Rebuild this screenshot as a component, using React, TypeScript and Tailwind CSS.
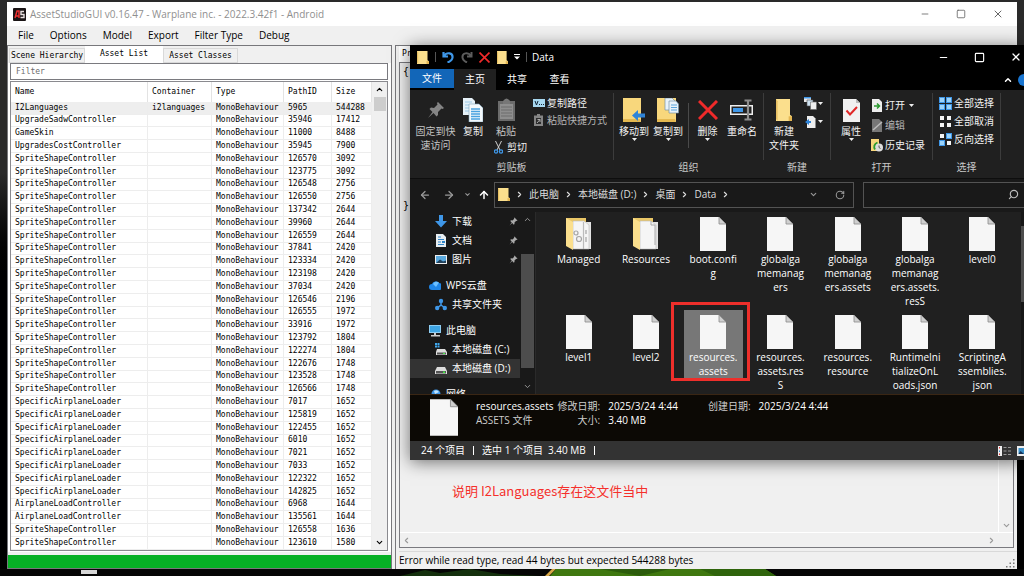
import React from "react";
import { ArrowLeft, ArrowRight, ArrowUp, ChevronDown, ChevronLeft, ChevronRight, ChevronUp, Minus, RotateCw, Search, Square, X } from "lucide-react";

const assets: [string, string, number, number][] = [
  ["I2Languages", "i2languages", 5965, 544288],
  ["UpgradeSadwController", "", 35946, 17412],
  ["GameSkin", "", 11000, 8488],
  ["UpgradesCostController", "", 35945, 7900],
  ["SpriteShapeController", "", 126570, 3092],
  ["SpriteShapeController", "", 123775, 3092],
  ["SpriteShapeController", "", 126548, 2756],
  ["SpriteShapeController", "", 126550, 2756],
  ["SpriteShapeController", "", 137342, 2644],
  ["SpriteShapeController", "", 39960, 2644],
  ["SpriteShapeController", "", 126559, 2644],
  ["SpriteShapeController", "", 37841, 2420],
  ["SpriteShapeController", "", 123334, 2420],
  ["SpriteShapeController", "", 123198, 2420],
  ["SpriteShapeController", "", 37034, 2420],
  ["SpriteShapeController", "", 126546, 2196],
  ["SpriteShapeController", "", 126555, 1972],
  ["SpriteShapeController", "", 33916, 1972],
  ["SpriteShapeController", "", 123792, 1804],
  ["SpriteShapeController", "", 122274, 1804],
  ["SpriteShapeController", "", 122676, 1748],
  ["SpriteShapeController", "", 123528, 1748],
  ["SpriteShapeController", "", 126566, 1748],
  ["SpecificAirplaneLoader", "", 7017, 1652],
  ["SpecificAirplaneLoader", "", 125819, 1652],
  ["SpecificAirplaneLoader", "", 122455, 1652],
  ["SpecificAirplaneLoader", "", 6010, 1652],
  ["SpecificAirplaneLoader", "", 7021, 1652],
  ["SpecificAirplaneLoader", "", 7033, 1652],
  ["SpecificAirplaneLoader", "", 122322, 1652],
  ["SpecificAirplaneLoader", "", 142825, 1652],
  ["AirplaneLoadController", "", 6968, 1644],
  ["AirplaneLoadController", "", 135561, 1644],
  ["SpriteShapeController", "", 126558, 1636],
  ["SpriteShapeController", "", 123610, 1580],
];

// lines are broken the way Explorer wraps long names
const files: { lines: string[]; kind?: string; selected?: boolean }[] = [
  { lines: ["Managed"], kind: "gears" },
  { lines: ["Resources"], kind: "folder" },
  { lines: ["boot.confi", "g"] },
  { lines: ["globalga", "memanag", "ers"] },
  { lines: ["globalga", "memanag", "ers.assets"] },
  { lines: ["globalga", "memanag", "ers.assets.", "resS"] },
  { lines: ["level0"] },
  { lines: ["level1"] },
  { lines: ["level2"] },
  { lines: ["resources.", "assets"], selected: true },
  { lines: ["resources.", "assets.res", "S"] },
  { lines: ["resources.", "resource"] },
  { lines: ["RuntimeIni", "tializeOnL", "oads.json"] },
  { lines: ["ScriptingA", "ssemblies.", "json"] },
];

export default function App() {
  return (
    <div className="relative flex h-screen w-full flex-col overflow-hidden bg-gradient-to-b from-[#2a2a2a] from-30% to-black to-50% px-[7px] pt-[2px] font-['Open_Sans','Noto_Sans_CJK_SC',sans-serif] text-[10px] text-black">
      <AssetStudio />
      <Wallpaper />
      <Explorer />
      <p className="absolute left-[452px] top-[482px] text-[13px] leading-[18px] text-[#f5302c] font-['Noto_Sans_CJK_SC',sans-serif]">
        说明 I2Languages存在这文件当中
      </p>
    </div>
  );
}

function Wallpaper() {
  return (
    <svg className="-mx-[7px] h-[7px] shrink-0 self-stretch" viewBox="0 0 1024 7" preserveAspectRatio="none" aria-hidden="true">
      <rect width="1024" height="7" fill="#050505" />
      <rect x="81" y="1" width="16" height="4" fill="#d6d6d6" />
      <path d="M400 7 L425 1 L440 4 L470 0 L500 5 L540 7Z" fill="#14300d" />
      <path d="M545 7 L552 0 L556 0 L549 7Z" fill="#d8a848" />
      <path d="M556 0 H765 L776 7 H550Z" fill="#3f780f" />
      <path d="M600 0 L640 7 L670 0Z" fill="#2c5c0c" />
      <path d="M700 0 H765 L776 7 H715Z" fill="#2f640c" />
    </svg>
  );
}

/* ---------- AssetStudio window ---------- */

function AssetStudio() {
  return (
    <main className="flex min-h-0 flex-1 flex-col bg-[#f0f0f0]">
      <header className="flex h-6 shrink-0 items-center bg-white pl-[6px] pr-[13px]">
        <svg viewBox="0 0 13 13" className="h-[13px] w-[13px]" aria-hidden="true">
          <rect width="13" height="13" rx="1" fill="#1a1415" />
          <path d="M2 10 L4 3 H6 V10 M3 8 H6" fill="none" stroke="#f03030" strokeWidth="1.4" />
          <path d="M11 3.5 H8 V6.5 H11 V9.5 H7.5" fill="none" stroke="#e8e0e0" strokeWidth="1.4" />
        </svg>
        <h1 className="ml-[4px] flex-1 text-[10px] text-[#8f8f8f]">AssetStudioGUI v0.16.47 - Warplane inc. - 2022.3.42f1 - Android</h1>
        <div className="flex gap-[26px] text-[#666]">
          <button aria-label="Minimize"><Minus size={10} strokeWidth={2} /></button>
          <button aria-label="Maximize"><Square size={10} strokeWidth={2} /></button>
          <button aria-label="Close"><X size={12} strokeWidth={2} /></button>
        </div>
      </header>
      <nav className="flex h-[19px] shrink-0 items-center gap-4 pl-[11px]">
        {["File", "Options", "Model", "Export", "Filter Type", "Debug"].map((m) => (
          <button key={m}>{m}</button>
        ))}
      </nav>
      <div className="flex min-h-0 flex-1">
        <AssetListPane />
        <PreviewPane />
      </div>
    </main>
  );
}

function AssetListPane() {
  return (
    <section className="flex w-[385px] shrink-0 flex-col border border-[#77777b] font-['DejaVu_Sans_Mono',monospace] text-[8px]">
      <div className="flex h-[17px] shrink-0 items-end pl-[1px]">
        <button className="h-[15px] w-[76px] border border-[#d9d9d9]">Scene Hierarchy</button>
        <button className="h-[17px] w-[78px] bg-white pb-[2px]">Asset List</button>
        <button className="h-[15px] w-[75px] border border-[#d9d9d9]">Asset Classes</button>
      </div>
      <div className="flex min-h-0 flex-1 flex-col bg-white pb-[1px] pl-[2px] pr-[3px]">
        <input aria-label="Filter" placeholder="Filter" className="h-[17px] w-full shrink-0 border border-[#7a7a7f] px-[5px] leading-none outline-none placeholder:text-[#6d6d6d]" />
        <div className="mt-[1px] flex min-h-0 flex-1 border border-[#8a8a8f]">
          <table className="min-w-0 flex-1 table-fixed border-collapse text-left">
            <colgroup>
              <col />
              <col className="w-[64px]" />
              <col className="w-[72px]" />
              <col className="w-[48px]" />
              <col className="w-[40px]" />
            </colgroup>
            <thead>
              <tr className="h-[20px]">
                {["Name", "Container", "Type", "PathID", "Size"].map((h) => (
                  <th key={h} className="border-r border-[#e3e3e3] p-0 pl-[4px] font-normal leading-none">{h}</th>
                ))}
              </tr>
            </thead>
            <tbody>
              {assets.map(([name, container, id, size], i) => (
                <tr key={i} className={i === 0 ? "bg-[#eeeeee]" : ""}>
                  {[name, container, "MonoBehaviour", id, size].map((v, c) => (
                    <td key={c} className="whitespace-nowrap border-b border-r border-[#ededed] p-0 pl-[4px] leading-[8px]">{v}</td>
                  ))}
                </tr>
              ))}
            </tbody>
          </table>
          <div className="flex w-[15px] flex-col items-center justify-between bg-[#f0f0f0] py-[3px]">
            <div className="flex flex-col items-center gap-[3px]">
              <ChevronUp size={9} strokeWidth={3} />
              <div className="h-[14px] w-[12px] bg-[#cdcdcd]" />
            </div>
            <ChevronDown size={9} strokeWidth={3} />
          </div>
        </div>
      </div>
      <div role="progressbar" aria-label="Loading" aria-valuenow={100} className="mt-[3px] h-[13px] shrink-0 bg-[#06b025]" />
    </section>
  );
}

function PreviewPane() {
  return (
    <section className="ml-[3px] flex min-w-0 flex-1 flex-col border-l border-t border-[#77777b] pl-[3px]">
      <button className="h-[16px] w-[48px] shrink-0 bg-white pl-[3px] text-left font-['DejaVu_Sans_Mono',monospace] text-[8px]">Preview</button>
      <div className="mr-[3px] flex min-h-0 flex-1 flex-col border border-[#7a7a7f]">
        <div className="flex min-h-0 flex-1">
          <pre className="flex flex-1 flex-col justify-between pb-[319px] pl-[3px] pt-[2px] font-['DejaVu_Sans_Mono',monospace] text-[10px] leading-[14px]">
            <span>{"{"}</span>
            <span>{"}"}</span>
          </pre>
          <div className="flex w-[15px] items-end justify-center border-l border-white pb-[2px] text-[#999]">
            <ChevronDown size={9} strokeWidth={3} />
          </div>
        </div>
        <div className="flex h-[15px] items-center justify-between border-t border-white pl-[2px] pr-[17px] text-[#999]">
          <ChevronLeft size={9} strokeWidth={3} />
          <ChevronRight size={9} strokeWidth={3} />
        </div>
      </div>
      <footer className="mt-[3px] flex h-[18px] shrink-0 items-center justify-between border-t border-[#d9d9d9]">
        <span>Error while read type, read 44 bytes but expected 544288 bytes</span>
        <svg viewBox="0 0 9 9" className="mr-[2px] mt-[5px] h-[9px] w-[9px]" fill="#777" aria-hidden="true">
          <path d="M7 0h1.500v1.500H7zM7 3.500h1.500V5H7zM7 7h1.500v1.500H7zM3.500 3.500H5V5H3.500zM3.500 7H5v1.500H3.500zM0 7h1.500v1.500H0z" />
        </svg>
      </footer>
    </section>
  );
}

/* ---------- Explorer window ---------- */

function Explorer() {
  return (
    <section className="absolute left-[410px] right-0 top-[45px] bg-[#191919] text-white shadow-[0_2px_16px_rgba(0,0,0,0.55)]">
      <header className="flex h-6 items-center bg-black pl-[7px]">
        <FolderIcon className="h-[13px] w-[12px]" />
        <Bar />
        <svg viewBox="0 0 12 12" className="ml-[6px] h-[12px] w-[12px]" fill="none" stroke="#3f97e8" strokeWidth="2.200" aria-hidden="true">
          <path d="M1.500 1 V5.500 H6 M2 5 C5 0.500 11 2 10.500 6.500 C10.300 9 8 10.500 5.500 11.500" />
        </svg>
        <svg viewBox="0 0 12 12" className="ml-[7px] h-[12px] w-[12px]" fill="none" stroke="#5c5c5c" strokeWidth="2" aria-hidden="true">
          <path d="M10.500 1 V5.500 H6 M10 5 C7 0.500 1 2 1.500 6.500 C1.700 9 4 10.500 6 11.500" />
        </svg>
        <CrossIcon className="ml-[6px] h-[11px] w-[11px]" />
        <FolderIcon className="ml-[7px] h-[13px] w-[11px]" />
        <svg viewBox="0 0 6 6" className="ml-[6px] h-[6px] w-[6px]" fill="#fff" aria-hidden="true"><path d="M0 0h6v1H0zM0 2.500h6L3 5.500z" /></svg>
        <Bar />
        <h2 className="ml-[5px] flex-1 text-[10px]">Data</h2>
        <div className="flex gap-[25px] pr-[2px]">
          <button aria-label="Minimize"><Minus size={11} strokeWidth={2.500} /></button>
          <button aria-label="Maximize"><Square size={11} strokeWidth={2.500} /></button>
          <button aria-label="Close"><X size={12} strokeWidth={2.500} /></button>
        </div>
      </header>
      <nav className="flex h-[21px] items-stretch bg-black">
        <button className="mb-[2px] w-[44px] bg-[#1266b8]">文件</button>
        <button className="w-[42px] bg-[#202020]">主页</button>
        <button className="w-[42px]">共享</button>
        <button className="w-[43px]">查看</button>
        <span className="flex-1" />
        <button aria-label="Collapse ribbon" className="pr-[5px]"><ChevronUp size={10} strokeWidth={3.500} /></button>
        <span className="h-[12px] w-[6px] self-center rounded-l-full bg-[#1976d2]" />
      </nav>
      <Ribbon />
      <AddressRow />
      <div className="flex h-[185px] pt-[3px]">
        <NavPane />
        <FileGrid />
        <div className="w-[3px] bg-[#171717] pt-[14px]"><div className="h-[76px] bg-[#4d4d4d]" /></div>
      </div>
      <DetailsPane />
      <footer className="flex h-[19px] items-center bg-[#333] pl-[11px]">
        <span>24 个项目</span>
        <span className="mx-[8px] h-[9px] w-px bg-white" />
        <span>选中 1 个项目</span>
        <span className="ml-[5px]">3.40 MB</span>
        <span className="mx-[8px] h-[9px] w-px bg-white" />
        <svg viewBox="0 0 26 12" className="ml-auto h-[12px] w-[26px]" aria-hidden="true">
          <path d="M0 1h4v10H0z" fill="#eee" />
          <path d="M1.500 2v1.500M1.500 8.500V10" stroke="#d33" />
          <path d="M1.500 5.500V7" stroke="#38c" />
          <path d="M5.500 2.500h3M5.500 6h3M5.500 9.500h3M10 2.500h3M10 6h3M10 9.500h3" stroke="#999" />
          <path d="M19 1h7v10h-7z" fill="#eee" />
          <path d="M20.500 3H26v6h-5.500z" fill="#3b90c8" />
          <path d="M20.500 9l2-3 3.500 3z" fill="#16345a" />
        </svg>
      </footer>
    </section>
  );
}

function Ribbon() {
  return (
    <div className="flex h-[89px] border-b border-[#0e0e0e] bg-[#202020] text-[#f2f2f2]">
      <Group label="剪贴板" width="w-[203px]" pad="pl-[5px]">
        <BigButton label={["固定到快", "速访问"]} className="w-[41px] text-[#c4c4c4]">
          <svg viewBox="0 0 18 18" className="h-[18px] w-[18px]" fill="#858585" aria-hidden="true">
            <path d="M11 1 L17 7 L15.500 8 L14.500 7.500 L11 11 L11 14 L9.500 15.500 L6.500 12 L1 17 L5.500 11 L2.500 8 L4 6.500 L7 7 L10.500 3.500 L10 2z" />
          </svg>
        </BigButton>
        <BigButton label={["复制"]} className="w-[34px]"><CopyIcon className="h-[24px] w-[20px]" /></BigButton>
        <div className="w-[32px]">
          <BigButton label={["粘贴"]} className="w-full text-[#c4c4c4]">
            <svg viewBox="0 0 17 24" className="h-[24px] w-[17px]" aria-hidden="true">
              <rect x="0" y="3" width="17" height="20" fill="#6c6c6c" />
              <rect x="2" y="6" width="13" height="15" fill="#8e8e8e" />
              <path d="M3 9h11M3 12h11M3 15h11M3 18h11" stroke="#6c6c6c" />
              <path d="M5 3 Q8.500 -2 12 3V6H5z" fill="#777" />
            </svg>
          </BigButton>
          <button className="mt-[2px] flex items-center gap-[4px] whitespace-nowrap pl-[4px] leading-[14px]">
            <svg viewBox="0 0 9 13" className="h-[13px] w-[9px] shrink-0" fill="none" aria-hidden="true">
              <path d="M1.500 0 L6 9 M7.500 0 L3 9" stroke="#d0d0d0" />
              <circle cx="2" cy="10.500" r="1.600" stroke="#3f97e8" strokeWidth="1.300" />
              <circle cx="7" cy="10.500" r="1.600" stroke="#3f97e8" strokeWidth="1.300" />
            </svg>
            剪切
          </button>
        </div>
        <div className="ml-[11px] flex flex-col gap-[3px] pt-[6px]">
          <SmallButton label="复制路径">
            <svg viewBox="0 0 12 12" className="h-[12px] w-[12px]" aria-hidden="true">
              <rect y="2" width="12" height="8" fill="#a8d8f0" />
              <path d="M2 4l1.500 4L5 4M6 7.500h1M8 7.500h1M10 7.500h1" stroke="#123" fill="none" />
            </svg>
          </SmallButton>
          <SmallButton label="粘贴快捷方式" className="text-[#b5b5b5]">
            <svg viewBox="0 0 12 12" className="h-[12px] w-[12px]" aria-hidden="true">
              <path d="M1 1.500h3V0h3v1.500h3V12H1z" fill="#858585" />
              <path d="M3 4h5v6H3z" fill="#2c2c2c" />
              <path d="M4 9 L7 5.500M4.500 5.500H7V8" stroke="#aaa" fill="none" />
            </svg>
          </SmallButton>
        </div>
      </Group>
      <Group label="组织" width="w-[149px]" pad="pl-[3px]">
        <BigButton label={["移动到"]} className="w-[34px]" menu>
          <svg viewBox="0 0 22 24" className="h-[24px] w-[22px]" aria-hidden="true">
            <path d="M0 0h18v24H0z" fill="#f8d77c" />
            <path d="M0 21h17l1 3H0z" fill="#e5b950" />
            <path d="M9 17.500l6-5.500v3.500h7v4h-7V23z" fill="#2f84d8" />
          </svg>
        </BigButton>
        <BigButton label={["复制到"]} className="w-[34px]" menu>
          <svg viewBox="0 0 22 24" className="h-[24px] w-[22px]" aria-hidden="true">
            <path d="M0 0h19v24H0z" fill="#f8d77c" />
            <path d="M0 21h18l1 3H0z" fill="#e5b950" />
            <path d="M8 0h7l3 3v9H8z" fill="#e8f3fa" stroke="#7794a8" strokeWidth=".7" />
            <path d="M12 3h7l2.500 3v9H12z" fill="#e8f3fa" stroke="#7794a8" strokeWidth=".7" />
            <path d="M14 7h6M14 9.500h6M14 12h6" stroke="#5aa5dc" />
          </svg>
        </BigButton>
        <span className="ml-[3px] mt-[13px] h-[45px] w-px bg-[#4a4a4a]" />
        <BigButton label={["删除"]} className="w-[37px]" menu><CrossIcon className="h-[20px] w-[20px]" /></BigButton>
        <BigButton label={["重命名"]} className="w-[32px]">
          <svg viewBox="0 0 24 22" className="h-[22px] w-[24px]" aria-hidden="true">
            <rect x="0" y="6" width="23" height="10" fill="#eee" />
            <rect x="1.500" y="7.500" width="20" height="7" fill="#222" />
            <rect x="3" y="9" width="10" height="4" fill="#3f97e8" />
            <path d="M18 2v18M14.500 1.500h7M14.500 20.500h7" stroke="#8e8e8e" strokeWidth="2.200" />
          </svg>
        </BigButton>
      </Group>
      <Group label="新建" width="w-[66px]">
        <BigButton label={["新建", "文件夹"]} className="w-[40px]"><FolderIcon className="h-[22px] w-[16px]" /></BigButton>
        <div className="flex flex-col gap-[5px] pt-[7px]">
          <button aria-label="新建项目" className="flex items-center gap-[1px]">
            <svg viewBox="0 0 13 13" className="h-[13px] w-[13px]" aria-hidden="true">
              <path d="M0 0h7v5H0z" fill="#e9e9e9" /><path d="M0 0h7v1.500H0z" fill="#3f97e8" />
              <path d="M3 3h6v6H3z" fill="#cfe3f2" stroke="#555" strokeWidth=".6" />
              <path d="M6.500 5h6v7.500h-6z" fill="#eee" stroke="#666" strokeWidth=".6" />
            </svg>
            <Caret />
          </button>
          <button aria-label="轻松访问" className="flex items-center gap-[1px]">
            <svg viewBox="0 0 13 13" className="h-[13px] w-[13px]" aria-hidden="true">
              <path d="M3 1h6l2.500 2.500V13H3z" fill="#eee" />
              <path d="M1 7l4-3v2h2v2H5v2z" fill="#2f84d8" />
            </svg>
            <Caret />
          </button>
        </div>
      </Group>
      <Group label="打开" width="w-[101px]">
        <BigButton label={["属性"]} className="w-[40px]" menu>
          <svg viewBox="0 0 17 23" className="h-[23px] w-[17px]" aria-hidden="true">
            <path d="M0 0h13l4 4v19H0z" fill="#f1f1f1" />
            <path d="M13 0v4h4z" fill="#bbb" />
            <path d="M3.500 11.500l3.500 4 7-7.500" stroke="#e02828" strokeWidth="2" fill="none" />
          </svg>
        </BigButton>
        <div className="flex flex-col gap-[6px] pt-[8px]">
          <SmallButton label="打开" menu>
            <svg viewBox="0 0 12 13" className="h-[13px] w-[12px]" aria-hidden="true">
              <path d="M1 0h7l3 3v10H1z" fill="#eee" />
              <path d="M3 7h5M6 4.500L8.500 7 6 9.500" stroke="#2b9a30" strokeWidth="1.500" fill="none" />
            </svg>
          </SmallButton>
          <SmallButton label="编辑" className="text-[#b5b5b5]">
            <svg viewBox="0 0 12 13" className="h-[13px] w-[12px]" aria-hidden="true">
              <path d="M1 0h7l3 3v10H1z" fill="#777" />
              <path d="M2 11L11 3" stroke="#bbb" strokeWidth="1.500" />
            </svg>
          </SmallButton>
          <SmallButton label="历史记录">
            <svg viewBox="0 0 12 13" className="h-[13px] w-[12px]" aria-hidden="true">
              <path d="M0 0h8v12H0z" fill="#f8d77c" />
              <circle cx="8" cy="8.500" r="4" fill="#ddd" />
              <path d="M8 6.500v2l1.500 1" stroke="#555" fill="none" />
              <path d="M6.500 3.500C3 5 2.500 8 4 10.500" stroke="#2b9a30" strokeWidth="1.800" fill="none" />
            </svg>
          </SmallButton>
        </div>
      </Group>
      <Group label="选择" width="w-[67px]" pad="pl-[6px]">
        <div className="flex flex-col gap-[4px] pt-[6px]">
          <SmallButton label="全部选择"><Tiles on={[true, true, true, true]} /></SmallButton>
          <SmallButton label="全部取消"><Tiles on={[false, false, false, false]} /></SmallButton>
          <SmallButton label="反向选择"><Tiles on={[false, true, true, false]} /></SmallButton>
        </div>
      </Group>
    </div>
  );
}

function Group({ label, width, pad = "", children }: { label: string; width: string; pad?: string; children: React.ReactNode }) {
  return (
    <div className="flex shrink-0">
      <div className={`flex flex-col ${width}`}>
        <div className={`flex h-[69px] ${pad}`}>{children}</div>
        <div className="text-center leading-[16px] text-[#c8c8c8]">{label}</div>
      </div>
      <span className="mt-[3px] h-[67px] w-px bg-[#3c3c3c]" />
    </div>
  );
}

function BigButton({ label, className, menu, children }: { label: string[]; className: string; menu?: boolean; children: React.ReactNode }) {
  return (
    <button className={`flex shrink-0 flex-col items-center self-start whitespace-nowrap pt-[8px] leading-[14px] ${className}`}>
      <span className="mb-[2px] flex h-[24px] items-center">{children}</span>
      {label.map((l) => <span key={l}>{l}</span>)}
      {menu && <Caret />}
    </button>
  );
}

function SmallButton({ label, className = "", menu, children }: { label: string; className?: string; menu?: boolean; children: React.ReactNode }) {
  return (
    <button className={`flex items-center gap-[2px] whitespace-nowrap leading-[14px] ${className}`}>
      {children}
      {label}
      {menu && <span className="ml-[2px]"><Caret /></span>}
    </button>
  );
}

function AddressRow() {
  return (
    <div className="flex h-[30px] items-center pt-[1px] text-[#ddd]">
      <div className="flex w-[84px] items-center pl-[9px]">
        <button aria-label="后退" className="text-[#999]"><ArrowLeft size={12} strokeWidth={2.500} /></button>
        <button aria-label="前进" className="ml-[12px] text-[#999]"><ArrowRight size={12} strokeWidth={2.500} /></button>
        <button aria-label="最近" className="ml-[9px] text-[#999]"><ChevronDown size={7} strokeWidth={3.500} /></button>
        <button aria-label="上移" className="ml-[7px] text-white"><ArrowUp size={12} strokeWidth={3} /></button>
      </div>
      <div className="flex h-[26px] min-w-0 flex-1 items-center border border-[#535353] pl-[3px] pr-[8px]">
        <FolderIcon className="h-[13px] w-[12px]" />
        {["此电脑", "本地磁盘 (D:)", "桌面", "Data"].map((c) => (
          <React.Fragment key={c}>
            <ChevronRight size={9} strokeWidth={3} className="mx-[5px] shrink-0" />
            <button className="whitespace-nowrap">{c}</button>
          </React.Fragment>
        ))}
        <ChevronRight size={9} strokeWidth={3} className="ml-[5px]" />
        <ChevronDown size={9} strokeWidth={3} className="ml-auto text-[#999]" />
        <RotateCw size={10} strokeWidth={2.500} className="ml-[17px] text-[#999]" />
      </div>
      <label className="ml-[9px] flex h-[26px] w-[161px] items-center border border-r-0 border-[#535353] pr-[5px]">
        <input aria-label="搜索" className="min-w-0 flex-1 bg-transparent px-[4px] outline-none" />
        <Search size={11} strokeWidth={2.500} className="-scale-x-100 text-[#bbb]" />
      </label>
    </div>
  );
}

function NavPane() {
  return (
    <aside className="flex w-[126px] shrink-0 overflow-hidden border-r border-[#2a2a2a]">
      <div className="flex w-[110px] flex-col">
        <NavItem label="下载" pinned sub>
          <path d="M4 0h4v6h4L6 12.500 0 6h4z" fill="#3f97e8" />
        </NavItem>
        <NavItem label="文档" pinned sub>
          <path d="M1 0h7l3 3v10H1z" fill="#e8eef2" /><path d="M3 3h3M3 5.500h6M3 8h3M3 10.500h6" stroke="#2f84c8" /><path d="M7 7h3v2H7z" fill="#2f84c8" />
        </NavItem>
        <NavItem label="图片" pinned sub>
          <path d="M0 2h12v9H0z" fill="#eee" /><path d="M1 3h10v7H1z" fill="#5aa9de" /><path d="M1 10l4-3.500 3 2 3-1v2.500z" fill="#20405a" />
        </NavItem>
        <div className="h-[7px] shrink-0" />
        <NavItem label="WPS云盘">
          <path d="M3 11a3 3 0 0 1 0-6 4 4 0 0 1 7-1 3.500 3.500 0 0 1-.5 7z" fill="#1f86e8" /><path d="M4 5a4 4 0 0 1 6-1.500L7 8z" fill="#6cc0ff" />
        </NavItem>
        <NavItem label="共享文件夹" sub>
          <path d="M6 3v4L2 10M6 7l4 3" stroke="#3f97e8" strokeWidth="1.500" fill="none" /><circle cx="6" cy="3" r="2.200" fill="#3f97e8" /><circle cx="2.200" cy="10" r="2.200" fill="#3f97e8" /><circle cx="9.800" cy="10" r="2.200" fill="#3f97e8" />
        </NavItem>
        <div className="h-[7px] shrink-0" />
        <NavItem label="此电脑">
          <path d="M0 1h12v8H0z" fill="#8fcdf2" /><path d="M1 2h10v6H1z" fill="#3ea5e4" /><path d="M5 9h2v2H5zM2 11h9v1.500H2z" fill="#ccc" />
        </NavItem>
        <NavItem label="本地磁盘 (C:)" sub>
          <path d="M0 0h2v2H0zM2.500 0h2v2h-2zM0 2.500h2v2H0zM2.500 2.500h2v2h-2z" fill="#3fa8ee" /><path d="M2 6h8l2 3v3H1V9z" fill="#ddd" /><path d="M2 9.500h9v2H2z" fill="#555" /><path d="M8 10h2v1H8z" fill="#4e4" />
        </NavItem>
        <NavItem label="本地磁盘 (D:)" sub active>
          <path d="M2 5h8l2 4v3H0V9z" fill="#ddd" /><path d="M1 9h10v2.500H1z" fill="#555" /><path d="M8 9.500h2v1.500H8z" fill="#4e4" />
        </NavItem>
        <div className="h-[7px] shrink-0" />
        <NavItem label="网络">
          <circle cx="7" cy="6" r="4.500" fill="#3f97e8" /><path d="M5 3q3-2 5 1L6 6z" fill="#bfe4ff" /><path d="M0 9h6v3H0z" fill="#7ab8e0" />
        </NavItem>
      </div>
      <div className="flex flex-1 flex-col items-center justify-between py-[3px] text-[#999]">
        <ChevronUp size={9} strokeWidth={2.500} />
        <div className="mb-[14px] mt-auto h-[114px] w-[13px] bg-[#4d4d4d]" />
        <ChevronDown size={9} strokeWidth={2.500} />
      </div>
    </aside>
  );
}

function NavItem({ label, sub, pinned, active, children }: { label: string; sub?: boolean; pinned?: boolean; active?: boolean; children: React.ReactNode }) {
  return (
    <a href="#" className={`flex h-[19px] shrink-0 items-center whitespace-nowrap ${sub ? "pl-[25px]" : "pl-[19px]"} ${active ? "bg-[#333]" : ""}`}>
      <svg viewBox="0 0 12 13" className="mr-[5px] h-[13px] w-[12px]" aria-hidden="true">{children}</svg>
      {label}
      {pinned && (
        <svg viewBox="0 0 18 18" className="ml-auto mr-[2px] h-[9px] w-[9px]" fill="#aaa" aria-hidden="true">
          <path d="M11 1 L17 7 L15.500 8 L14.500 7.500 L11 11 L11 14 L9.500 15.500 L6.500 12 L1 17 L5.500 11 L2.500 8 L4 6.500 L7 7 L10.500 3.500 L10 2z" />
        </svg>
      )}
    </a>
  );
}

function FileGrid() {
  return (
    <div className="grid flex-1 auto-rows-[95px] grid-cols-7 gap-y-[3px] overflow-hidden bg-[#202020] pl-[9px] pr-[5px]">
      {files.map((f, i) => (
        <div key={i} className="relative flex flex-col items-center text-center leading-[14px]">
          {f.selected && <div className="absolute inset-x-[4px] top-0 h-[68px] bg-[#777]" />}
          {f.selected && <div className="absolute -left-[9px] -right-[3px] -top-[8px] z-10 h-[79px] border-[3px] border-[#ee2f2b]" />}
          <div className="relative flex flex-col items-center pt-[5px]">
            {f.kind ? <OpenFolder gears={f.kind === "gears"} /> : <PageIcon className="h-[34px] w-[26px]" />}
            <div className="mt-[1px] whitespace-nowrap">
              {f.lines.map((l) => <div key={l}>{l}</div>)}
            </div>
          </div>
        </div>
      ))}
    </div>
  );
}

function DetailsPane() {
  return (
    <div className="flex h-[47px] border-t border-[#3a2614] bg-[#0c0905] pl-[20px] pt-[4px]">
      <PageIcon className="h-[37px] w-[28px]" />
      <div className="ml-[18px] grid auto-rows-min grid-cols-[auto_auto_auto_auto_auto] gap-x-[4px] leading-[14px]">
        <span>resources.assets</span>
        <span className="text-right text-[#ccc]">修改日期:</span>
        <span className="ml-[4px] mr-[26px]">2025/3/24 4:44</span>
        <span className="text-[#ccc]">创建日期:</span>
        <span className="ml-[4px]">2025/3/24 4:44</span>
        <span className="text-[#ccc]">ASSETS 文件</span>
        <span className="text-right text-[#ccc]">大小:</span>
        <span className="ml-[4px]">3.40 MB</span>
      </div>
    </div>
  );
}

/* ---------- icons ---------- */

function Bar() {
  return <span className="ml-[6px] h-[10px] w-px bg-[#555]" />;
}

function Caret() {
  return <svg viewBox="0 0 5 3" className="h-[3px] w-[5px]" fill="#eee" aria-hidden="true"><path d="M0 0h5L2.500 3z" /></svg>;
}

function CrossIcon({ className }: { className: string }) {
  return (
    <svg viewBox="0 0 20 20" className={className} stroke="#f02a2a" strokeWidth="3" aria-hidden="true"><path d="M1 1L19 19M19 1L1 19" /></svg>
  );
}

function FolderIcon({ className }: { className: string }) {
  return (
    <svg viewBox="0 0 12 14" preserveAspectRatio="none" className={className} aria-hidden="true">
      <path d="M0 0h10.500v10l1.500 1v3H0z" fill="#fbdf8d" />
      <path d="M0 0l1.200 1.500V14L0 12.500z" fill="#e8c063" />
      <path d="M9.500 11h2.500v3H9.500z" fill="#e3b551" />
    </svg>
  );
}

function PageIcon({ className }: { className: string }) {
  return (
    <svg viewBox="0 0 26 34" className={className} aria-hidden="true">
      <path d="M0 0h19l7 7v27H0z" fill="#f6f6f6" />
      <path d="M19 0v7h7z" fill="#cfcfcf" stroke="#8a8a8a" strokeWidth=".8" />
    </svg>
  );
}

function CopyIcon({ className }: { className: string }) {
  return (
    <svg viewBox="0 0 20 24" className={className} aria-hidden="true">
      <path d="M0 0h9l3 3v14H0z" fill="#e6f1f8" />
      <path d="M2 4h7M2 7h7M2 10h7M2 13h7" stroke="#9cc9e6" />
      <path d="M6 6h10l4 4v14H6z" fill="#f4f9fc" stroke="#7fa5be" strokeWidth=".6" />
      <path d="M8 11h9M8 13.500h9M8 16h9M8 18.500h9M8 21h9" stroke="#4aa3e0" strokeWidth="1.300" />
    </svg>
  );
}

function Tiles({ on }: { on: boolean[] }) {
  return (
    <svg viewBox="0 0 13 13" className="h-[13px] w-[13px]" aria-hidden="true">
      {on.map((v, i) => (
        <g key={i}>
          <rect x={(i % 2) * 7} y={i > 1 ? 7 : 0} width="6" height="6" fill={v ? "#3f97e8" : "#202020"} />
          <rect x={(i % 2) * 7 + 1} y={i > 1 ? 8 : 1} width="4" height="4" fill={v ? "#9bd3fa" : "#f4f4f4"} />
        </g>
      ))}
    </svg>
  );
}

function OpenFolder({ gears }: { gears: boolean }) {
  return (
    <svg viewBox="0 0 26 34" className="h-[34px] w-[26px]" aria-hidden="true">
      <path d="M0 1h20v28H0z" fill="#eac767" />
      <path d="M15 5h10v27H15z" fill="#e4e4e4" />
      <path d="M7 4h11l5 4v24H7z" fill="#f5f5f5" stroke="#bbb" strokeWidth=".6" />
      {gears ? (
        <g fill="none" stroke="#a5a5a5" strokeWidth="1.200">
          <path d="M17.500 5v27" stroke="#bbb" />
          <circle cx="10" cy="16" r="2" />
          <circle cx="13" cy="22" r="2.500" />
          <path d="M20 13v4M20 20v5" />
        </g>
      ) : (
        <path d="M18 4v4h4v20" fill="none" stroke="#aaa" />
      )}
      <path d="M0 1l7 4v28l-7-4z" fill="#fbdf8d" />
    </svg>
  );
}
